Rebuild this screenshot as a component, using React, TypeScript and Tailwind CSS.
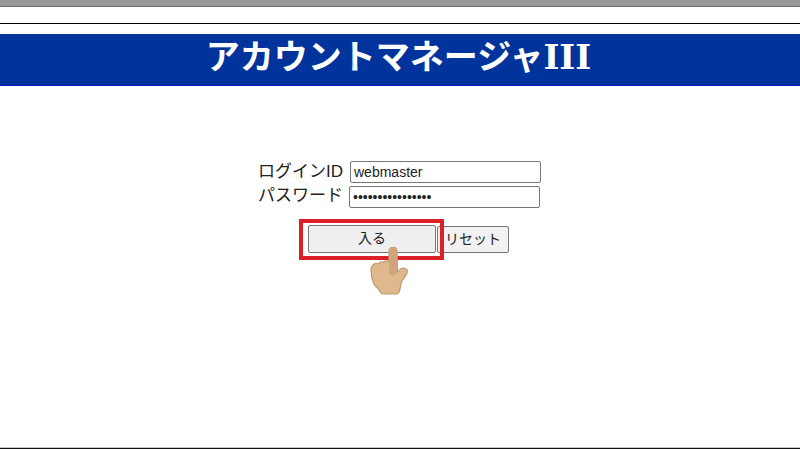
const CJK = "font-['Liberation_Sans','Noto_Sans_CJK_JP',sans-serif]";

function Hand() {
  return (
    <svg
      className="absolute left-[368px] top-[245px] h-[52px] w-[42px]"
      viewBox="0 0 42 52"
      fill="none"
    >
      <path
        d="M21 6c0-5 8-5 8 0l.5 21c1.500-2 3.500-4 6-4 3 0 4.500 2.500 3.500 5-1.500 3.500-4 6-5.500 9-1 2-1 5-1.500 7-.3 2-1 4-3 5H15c-2 0-3-2-4-4-1-2-4-3.500-5.500-7C3.500 33 3 29 3 25c0-3 2-6 4.500-6.500 1-.2 2 0 3 .5 1-1.700 3-2.400 5-1.700 1.500-1.300 4-1.500 5.500-.8z"
        fill="#dfb88d"
        stroke="#bb9a70"
        strokeWidth="1.200"
        strokeLinejoin="round"
      />
      <path
        d="M21.500 6c0-4 7-4 7 0l.5 21c-1 2-2 3-3.500 3.500-2.500 0-4-1-4.500-3.500z"
        fill="#cfa67c"
      />
    </svg>
  );
}

export default function App() {
  return (
    <div className={`relative flex h-[450px] w-[800px] flex-col overflow-hidden bg-white text-[#222] ${CJK}`}>
      {/* Top */}
      <div className="h-[7px] border-b border-[#6f6f6f] bg-[#999999]" />
      <div className="mt-[16px] h-[1px] bg-black" />

      {/* Title */}
      <h1 className="mt-[10px] h-[52px] border-b border-[#1010c8] bg-[#00339b] pr-[3px] text-center text-[34px] font-bold leading-[47px] text-white">
        <span className="font-['DejaVu_Serif','Noto_Sans_CJK_JP',serif]">アカウントマネージャIII</span>
      </h1>

      {/* Form */}
      <div className="ml-[258px] mt-[75px] flex flex-col">
        <div className="flex h-[25px] items-start">
          <span className="w-[92px] text-[17px] leading-[21px]">ログインID</span>
          <input
            readOnly
            value="webmaster"
            className="h-[22px] w-[191px] rounded-[2px] border border-[#767676] px-[3px] text-[14px] text-[#222] outline-none"
          />
        </div>
        <div className="flex h-[25px] items-start">
          <span className="w-[91px] text-[17px] leading-[20px]">パスワード</span>
          <input
            readOnly
            type="password"
            value="webmaster1234567"
            className="h-[22px] w-[191px] rounded-[2px] border border-[#767676] px-[3px] text-[14px] text-[#222] outline-none"
          />
        </div>
        <div className="ml-[50px] mt-[14px] flex items-start gap-[1px]">
          <button className="h-[28px] w-[128px] rounded-[2px] border border-[#767676] bg-[#efefef] pb-[2px] text-[14px] leading-none text-[#222]">
            入る
          </button>
          <button className="mt-[1px] h-[27px] w-[72px] rounded-[2px] border border-[#767676] bg-[#f2f2f2] pb-[2px] text-[14px] leading-none text-[#222]">
            リセット
          </button>
        </div>
      </div>

      {/* Bottom line */}
      <div className="mb-[1px] mt-auto h-[2px] border-t border-[#c8c8c8] bg-[#111]" />

      {/* Callout */}
      <div className="absolute left-[299px] top-[219px] h-[41px] w-[145px] border-[4px] border-[#dc2028]" />
      <Hand />
    </div>
  );
}
